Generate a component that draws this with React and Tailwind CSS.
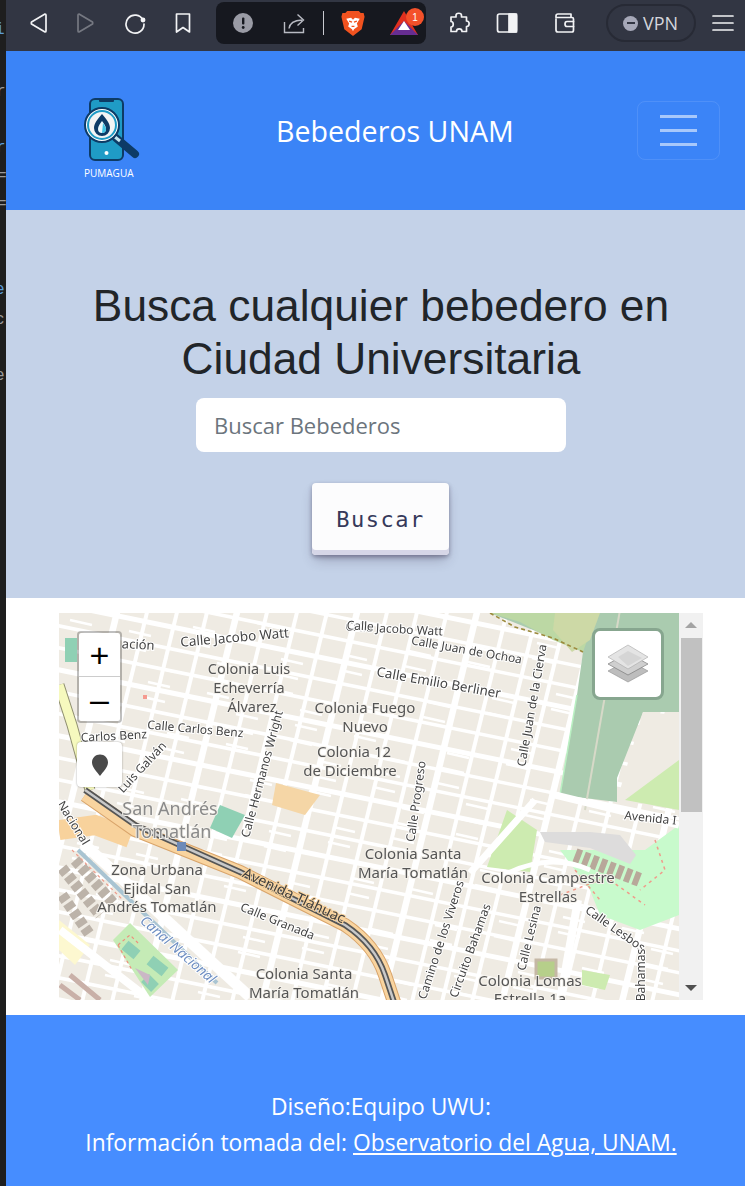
import React from 'react'

const SANS = 'font-["Open_Sans","Noto_Sans",sans-serif]'

// Labels on the map, in page coordinates (the svg viewBox starts at 59,613)
const PLACES = [
  ['Colonia Luis', 249, 674], ['Echeverría', 249, 693], ['Álvarez', 252, 712],
  ['Colonia Fuego', 365, 713], ['Nuevo', 365, 732], ['Colonia 12', 354, 757], ['de Diciembre', 350, 776],
  ['Zona Urbana', 157, 875], ['Ejidal San', 157, 894], ['Andrés Tomatlán', 157, 912],
  ['Colonia Santa', 413, 859], ['María Tomatlán', 413, 878],
  ['Colonia Campestre', 548, 883], ['Estrellas', 548, 902],
  ['Colonia Santa', 304, 979], ['María Tomatlán', 304, 998],
  ['Colonia Lomas', 530, 986], ['Estrella 1a', 530, 1004],
]

const STREETS = [
  ['Calle Jacobo Watt', 235, 642, -5, 13.4], ['Calle Jacobo Watt', 394, 633, 3, 12],
  ['Calle Juan de Ochoa', 466, 654, 10, 12], ['Calle Emilio Berliner', 438, 687, 10, 13.4],
  ['Calle Juan de la Cierva', 536, 706, -80, 12], ['Calle Carlos Benz', 195, 733, 5, 12],
  ['Carlos Benz', 114, 740, -3, 12], ['Luis Galván', 145, 770, -47, 12],
  ['Calle Hermanos Wright', 266, 775, -75, 12], ['Calle Progreso', 420, 802, -82, 12],
  ['Calle Granada', 276, 925, 22, 12], ['Camino de los Viveros', 445, 941, -72, 12],
  ['Circuito Bahamas', 474, 952, -70, 12], ['Calle Lesina', 533, 939, -76, 12],
  ['Calle Lesbos', 613, 932, 35, 12], ['Avenida I', 650, 822, 6, 12], ['Bahamas', 645, 975, -90, 12],
  ['Calle', 360, 630, 3, 12], ['ación', 138, 649, 3, 13], ['Nacional', 70, 825, 58, 12],
]

// White street grid: two families of long parallel streets plus short alleys
function streetLines() {
  const lines = []
  for (let i = -16; i < 32; i++) {
    const y = 600 + i * 22
    lines.push({ d: `M 40 ${y} L 700 ${y + 135}`, w: i % 3 === 0 ? 5 : 3.5 })
  }
  for (let i = 0; i < 28; i++) {
    const x = 120 + i * 30
    lines.push({ d: `M ${x} 600 L ${x - 100} 1010`, w: i % 4 === 0 ? 6.5 : 4 })
  }
  for (let i = 0; i < 150; i++) {
    const x = 70 + ((i * 83) % 600)
    const y = 620 + ((i * 47) % 380)
    lines.push({ d: `M ${x} ${y} L ${x + 22} ${y + 5}`, w: 2.5 })
  }
  return lines
}

function MapDrawing() {
  return (
    <svg viewBox="59 613 620 387" className="block h-[387px] w-[620px] blur-[0.4px]" style={{ fontFamily: '"Noto Sans", sans-serif' }}>
      <rect x="59" y="613" width="620" height="387" fill="#efebe3" />
      {streetLines().map((l, i) => (
        <path key={i} d={l.d} stroke="#ffffff" strokeWidth={l.w} fill="none" />
      ))}

      {/* Parks and green areas */}
      <path d="M 490 613 L 679 613 L 679 712 L 643 712 L 617 778 L 617 802 L 560 795 L 577 695 L 583 652 L 553 638 Z" fill="#aacbaf" />
      <path d="M 490 613 L 555 613 L 585 613 L 590 632 L 583 652 L 553 640 L 520 622 Z" fill="#bcd8a4" />
      <path d="M 555 613 L 600 613 L 590 640 L 572 652 L 553 630 Z" fill="#cdd9a6" />
      <path d="M 577 695 L 560 795" stroke="#b9f0c2" strokeWidth="1.5" fill="none" />
      <path d="M 490 613 L 515 627 L 553 638 L 583 652" stroke="#9c8a3c" strokeWidth="1.6" strokeDasharray="4 3" fill="none" />
      <path d="M 620 610 L 585 810" stroke="#d7d9c8" strokeWidth="2" fill="none" />
      <path d="M 643 712 L 679 715 L 679 810 L 617 800 Z" fill="#efebe3" />
      <path d="M 625 800 L 679 760 L 679 810 Z" fill="#cdebb0" />
      <path d="M 645 850 L 679 825 L 679 915 L 640 930 L 600 915 L 590 890 L 560 850 Z" fill="#c8facc" />
      <path d="M 487 867 L 507 810 L 537 830 L 530 872 L 513 870 Z" fill="#cdebb0" />
      <path d="M 540 832 L 590 832 L 620 835 L 636 855 L 630 864 L 590 848 L 545 842 Z" fill="#dddcdc" />
      <path d="M 575 855 L 640 880" stroke="#b8a89a" strokeWidth="14" strokeDasharray="6 3" fill="none" />
      <path d="M 575 870 L 600 900 M 610 880 L 645 905 M 560 895 L 600 880 M 655 840 L 665 870 L 640 890" stroke="#f19a8a" strokeWidth="1.5" strokeDasharray="3 4" fill="none" />
      <path d="M 220 805 L 245 815 L 232 838 L 210 828 Z" fill="#8fd0b4" />
      <path d="M 276 783 L 320 795 L 305 815 L 272 805 Z" fill="#f5d6a6" />
      <rect x="65" y="638" width="12" height="24" fill="#8fd0b4" />
      <rect x="143" y="695" width="4" height="4" fill="#f59a90" />
      <rect x="536" y="960" width="20" height="18" fill="#b6cf8a" stroke="#c5b8a5" strokeWidth="3" />
      <path d="M 582 970 L 610 975 L 605 990 L 582 985 Z" fill="#cdebb0" />

      {/* Wide white roads on the east side */}
      <path d="M 555 795 L 679 825 M 535 800 L 470 873" stroke="#ffffff" strokeWidth="7" fill="none" />
      <path d="M 495 880 Q 545 850 590 870" stroke="#ffffff" strokeWidth="5" fill="none" />
      <path d="M 578 900 L 560 1000" stroke="#ffffff" strokeWidth="8" fill="none" />

      {/* Buildings west of the canal */}
      <path d="M 62 868 L 100 915 M 62 895 L 90 935 M 75 860 L 115 905" stroke="#bcb3a9" strokeWidth="11" strokeDasharray="7 3" fill="none" />
      <path d="M 59 920 L 90 945 L 75 965 L 59 950 Z" fill="#fdf8d0" />
      <path d="M 70 975 L 100 1000 M 60 985 L 80 1000" stroke="#c9b0a8" strokeWidth="5" fill="none" />

      {/* Canal Nacional and the road beside it */}
      <path d="M 83 843 L 250 997" stroke="#ffffff" strokeWidth="11" fill="none" />
      <path d="M 78 850 L 130 900 L 217 983" stroke="#a9c4d2" strokeWidth="4" fill="none" />
      <path d="M 72 850 L 125 902" stroke="#ee9d8c" strokeWidth="1.2" strokeDasharray="3 3" fill="none" />
      <path d="M 60 930 L 150 1000" stroke="#ffffff" strokeWidth="8" fill="none" />

      {/* Park by the canal */}
      <path d="M 113 940 L 130 923 L 178 970 L 150 997 Z" fill="#c5ebb6" />
      <path d="M 125 945 L 137 955 M 150 960 L 165 972 M 145 978 L 155 988" stroke="#8fd0b4" strokeWidth="11" fill="none" />
      <path d="M 135 968 L 150 975 L 148 985 Z" fill="#cbb8c6" />
      <path d="M 118 945 L 130 935 L 140 945 M 118 945 L 132 970" stroke="#ee8d7c" strokeWidth="1.2" strokeDasharray="3 3" fill="none" />

      {/* Yellow road along the left edge */}
      <path d="M 59 685 L 72 725 L 90 790" stroke="#8f8f70" strokeWidth="11" fill="none" />
      <path d="M 59 685 L 72 725 L 90 790" stroke="#f6f9be" strokeWidth="9" fill="none" />

      {/* Avenida Tlahuac with the metro line on top */}
      <path d="M 59 830 L 95 825 L 130 838" stroke="#f8d29c" strokeWidth="20" fill="none" />
      <path d="M 85 795 L 135 830 L 240 872 L 345 925 Q 375 945 385 975 L 395 1005" stroke="#d9a46a" strokeWidth="14" fill="none" />
      <path d="M 85 795 L 135 830 L 240 872 L 345 925 Q 375 945 385 975 L 395 1005" stroke="#f9d49f" strokeWidth="12" fill="none" />
      <path d="M 85 790 L 135 825 L 240 872 L 345 925 Q 375 945 385 975 L 395 1005" stroke="#555555" strokeWidth="6" fill="none" />
      <path d="M 85 790 L 135 825 L 240 872 L 345 925 Q 375 945 385 975 L 395 1005" stroke="#c9c9c9" strokeWidth="2.5" fill="none" />
      <rect x="177" y="842" width="9" height="9" fill="#6d8ab8" />

      {/* Labels */}
      <g fontSize="15" fill="#555555" stroke="#f5f2ec" strokeWidth="2" paintOrder="stroke" textAnchor="middle">
        {PLACES.map(([t, x, y], i) => <text key={i} x={x} y={y} fontSize={i < 3 ? 14.5 : 15}>{t}</text>)}
      </g>
      <g fontSize="18" fill="#8a8a8a" stroke="#f5f2ec" strokeWidth="2" paintOrder="stroke" textAnchor="middle">
        <text x="170" y="815">San Andrés</text>
        <text x="172" y="838">Tomatlán</text>
      </g>
      <g fill="#444444" stroke="#ffffff" strokeWidth="2" paintOrder="stroke" textAnchor="middle">
        {STREETS.map(([t, x, y, r, size], i) => (
          <text key={i} x={x} y={y} fontSize={size} transform={`rotate(${r} ${x} ${y})`}>{t}</text>
        ))}
      </g>
      <text x="292" y="900" transform="rotate(25 292 900)" fontSize="14.5" fill="#3e3e3e" stroke="#f9d49f" strokeWidth="2" paintOrder="stroke" textAnchor="middle">Avenida Tláhuac</text>
      <text x="175" y="953" transform="rotate(41 175 953)" fontSize="14" fontStyle="italic" fill="#6f8fc2" stroke="#ffffff" strokeWidth="2" paintOrder="stroke" textAnchor="middle">Canal Nacional</text>
    </svg>
  )
}

function ToolbarIcon({ children, className = 'ml-0' }) {
  return (
    <svg viewBox="0 0 24 24" fill="none" stroke="#f2f3f5" strokeWidth="1.7" strokeLinejoin="round" strokeLinecap="round" className={`h-6 w-6 shrink-0 ${className}`}>
      {children}
    </svg>
  )
}

function BrowserBar() {
  return (
    <div className="flex h-[51px] items-center bg-[#323643] pb-[5px]">
      <ToolbarIcon className="ml-[20px]"><path d="M 19 3 L 5.5 11 Q 5 12 5.5 13 L 19 21 Q 20 21 20 20 L 20 4 Q 20 3 19 3 Z" /></ToolbarIcon>
      <ToolbarIcon className="ml-[24px] opacity-35"><path d="M 5 3 L 18.5 11 Q 19 12 18.5 13 L 5 21 Q 4 21 4 20 L 4 4 Q 4 3 5 3 Z" /></ToolbarIcon>
      <ToolbarIcon className="ml-[25px]"><path d="M 20 9 A 9 9 0 1 0 21 13" /><circle cx="20" cy="9" r="1.6" fill="#f2f3f5" /></ToolbarIcon>
      <ToolbarIcon className="ml-[24px]"><path d="M 5.5 3 L 18.5 3 L 18.5 21 L 12 16.5 L 5.5 21 Z" /></ToolbarIcon>

      {/* Address bar pill */}
      <div className="ml-[21px] flex h-[42px] w-[210px] shrink-0 items-center rounded-lg bg-[#16181f] pl-[15px]">
        <svg viewBox="0 0 24 24" className="h-6 w-6 shrink-0">
          <circle cx="12" cy="12" r="10" fill="#9a9ba5" />
          <rect x="11" y="6.5" width="2.4" height="7" rx="1" fill="#16181f" />
          <circle cx="12.2" cy="16.5" r="1.4" fill="#16181f" />
        </svg>
        <svg viewBox="0 0 24 24" fill="none" stroke="#b9bbc3" strokeWidth="1.4" className="ml-[27px] h-6 w-6 shrink-0">
          <path d="M 2.5 11 L 2.5 21.5 L 21.5 21.5 L 21.5 17" />
          <path d="M 7 17.5 Q 8 9.5 20 9 M 15.5 3.5 L 21.5 9 L 15.5 14.5" />
        </svg>
        <div className="ml-[17px] h-[24px] w-px bg-[#c9cad0]" />
        <svg viewBox="0 0 24 28" className="ml-[17px] h-[27px] w-6 shrink-0">
          <path d="M 6 1 L 18 1 L 20 3 L 23 3 L 24 7 L 21 20 L 12 27 L 3 20 L 0 7 L 1 3 L 4 3 Z" fill="#f1521f" />
          <path d="M 5 9 L 10 8 L 12 10 L 14 8 L 19 9 L 16 14 L 17 17 L 13 20 L 12 22 L 11 20 L 7 17 L 8 14 Z" fill="#ffffff" />
          <path d="M 8 11.5 L 11 12.5 M 16 11.5 L 13 12.5 M 10.5 17 L 13.5 17" stroke="#f1521f" strokeWidth="1.4" />
        </svg>
        <div className="relative ml-[25px] h-[24px] w-[28px] shrink-0">
          <svg viewBox="0 0 28 24" className="h-[24px] w-[28px]">
            <path d="M 14 0 L 28 24 L 0 24 Z" fill="#e0301e" />
            <path d="M 14 10 L 28 24 L 0 24 Z" fill="#662d91" />
            <path d="M 14 10 L 20 19 L 8 19 Z" fill="#ffffff" />
          </svg>
          <span className="absolute -right-[6px] -top-[3px] flex h-[18px] w-[18px] items-center justify-center rounded-full bg-[#f4512a] font-['Liberation_Sans',sans-serif] text-[10px] text-white">1</span>
        </div>
      </div>

      <ToolbarIcon className="ml-[21px]"><path d="M 9 4.5 C 9 1.5 14.5 1.5 14.5 4.5 L 14.5 6 L 19.5 6 L 19.5 10 C 23 10 23 15.5 19.5 15.5 L 19.5 20.5 L 15 20.5 C 15 17 9.5 17 9.5 20.5 L 4 20.5 L 4 16 C 7 16 7 10.5 4 10.5 L 4 6 L 9 6 Z" /></ToolbarIcon>
      <ToolbarIcon className="ml-[24px]"><rect x="2.5" y="3" width="19" height="18" rx="2" /><path d="M 14 3 L 21.5 3 L 21.5 21 L 14 21 Z" fill="#f2f3f5" /></ToolbarIcon>
      <ToolbarIcon className="ml-[33px]"><path d="M 4 8 L 4 19 Q 4 21 6 21 L 20 21 Q 21.5 21 21.5 19 L 21.5 8 Q 21.5 6.5 20 6.5 L 4 6.5 M 4 6.5 L 4 5 Q 4 3 6 3 L 19 3 L 19 6.5" /><path d="M 21.5 10.5 L 15 10.5 Q 13 10.5 13 13 Q 13 15.5 15 15.5 L 21.5 15.5" /></ToolbarIcon>

      {/* VPN pill */}
      <div className="ml-[30px] flex h-[38px] w-[90px] shrink-0 items-center rounded-full border-2 border-[#272a35] pl-[15px]">
        <span className="flex h-[15px] w-[15px] items-center justify-center rounded-full bg-[#a6a8b8]">
          <span className="h-[2px] w-[8px] bg-[#323643]" />
        </span>
        <span className={`ml-[5px] text-[18px] text-[#d4d6dd] ${SANS}`}>VPN</span>
      </div>

      <ToolbarIcon className="ml-[15px]"><path d="M 2 5 L 22 5 M 2 12 L 22 12 M 2 19 L 22 19" /></ToolbarIcon>
    </div>
  )
}

function Logo() {
  return (
    <div className="mt-[16px] flex w-[56px] flex-col">
      <svg viewBox="0 0 56 64" className="h-[64px] w-[56px]">
        <rect x="6" y="1" width="33" height="61" rx="5" fill="#1f9bc6" stroke="#0d3b66" strokeWidth="2" />
        <rect x="15" y="1" width="15" height="3" rx="1" fill="#0d3b66" />
        <circle cx="22.5" cy="55" r="2" fill="#ffffff" />
        <path d="M 32 40 L 51 56" stroke="#0d3b66" strokeWidth="8" strokeLinecap="round" />
        <path d="M 31 39 L 36 43" stroke="#c6e6f0" strokeWidth="3" />
        <circle cx="18" cy="27" r="17" fill="#ffffff" stroke="#0d3b66" strokeWidth="2" />
        <circle cx="18" cy="27" r="14" fill="#f4f4f4" stroke="#1f9bc6" strokeWidth="2" />
        <path d="M 18 16 C 22 21 26 25 26 30 A 8 8 0 0 1 10 30 C 10 25 14 21 18 16 Z" fill="#0d3b66" />
        <path d="M 18 23 C 20 26 22 28 22 31 A 4 4 0 0 1 14 31 C 14 28 16 26 18 23 Z" fill="#eaf8fc" />
        <path d="M 18 35 A 4 4 0 0 0 22 31 C 22 29 20 27 19 25 Z" fill="#3fc3e4" />
      </svg>
      <span className={`mt-[5px] whitespace-nowrap text-[10px] leading-3 text-white ${SANS}`}>PUMAGUA</span>
    </div>
  )
}

export default function App() {
  return (
    <div className="flex h-[1186px] w-[745px] overflow-hidden bg-white">
      {/* Sliver of the editor window behind the browser */}
      <div className="relative w-[6px] shrink-0 overflow-hidden bg-[#1e1e1e] font-['Liberation_Mono',monospace] text-[16px] leading-5 text-[#9a9a9a]">
        <span className="absolute -left-[5px] top-[20px] text-[#5a9bd8]">i</span>
        <span className="absolute -left-[4px] top-[82px]">r</span>
        <span className="absolute -left-[4px] top-[138px] text-[#5a9bd8]">r</span>
        <span className="absolute -left-[3px] top-[166px]">=</span>
        <span className="absolute -left-[3px] top-[194px]">=</span>
        <span className="absolute -left-[5px] top-[280px] text-[#5a9bd8]">e</span>
        <span className="absolute -left-[5px] top-[310px]">c</span>
        <span className="absolute -left-[5px] top-[366px]">e</span>
      </div>

      <div className="w-[750px] shrink-0">
        <BrowserBar />

        {/* Header */}
        <header className="flex h-[159px] items-center bg-[#3b84f7] pl-[78px] pr-[36px]">
          <Logo />
          <h2 className={`ml-[136px] mt-[2px] whitespace-nowrap text-[28.6px] font-normal text-white ${SANS}`}>Bebederos UNAM</h2>
          <button className="ml-auto flex h-[59px] w-[83px] flex-col items-center justify-center gap-[11px] rounded-lg border border-white/10">
            <span className="h-[3px] w-[37px] bg-white/55" />
            <span className="h-[3px] w-[37px] bg-white/55" />
            <span className="h-[3px] w-[37px] bg-white/55" />
          </button>
        </header>

        {/* Search */}
        <section className="flex h-[388px] flex-col items-center bg-[#c4d2e8] pt-[69px]">
          <h1 className="text-center font-['Liberation_Sans',sans-serif] text-[44.3px] font-normal leading-[53px] text-[#212529]">
            Busca cualquier bebedero en<br />Ciudad Universitaria
          </h1>
          <input
            placeholder="Buscar Bebederos"
            className={`mt-[13px] h-[54px] w-[370px] rounded-lg bg-white px-[18px] text-[22px] outline-none placeholder:text-[#6c757d] ${SANS}`}
          />
          <button className="mr-[1px] mt-[31px] h-[72px] w-[137px] rounded bg-[#fcfcfd] font-['DejaVu_Sans_Mono',monospace] text-[22px] tracking-[1.5px] text-[#36395a] shadow-[0_2px_4px_rgba(45,35,66,0.4),0_7px_13px_-3px_rgba(45,35,66,0.3),inset_0_-5px_0_#d6d6e7]">
            Buscar
          </button>
        </section>

        {/* Map */}
        <section className="flex h-[417px] px-[53px] pt-[15px]">
          <div className="relative h-[387px] w-[620px] shrink-0 overflow-hidden">
            <MapDrawing />
            <div className="absolute left-[18px] top-[18px] flex w-[45px] flex-col overflow-hidden rounded border-2 border-black/25 bg-white bg-clip-padding">
              <div className="flex h-[44px] items-center justify-center border-b border-[#cccccc] font-['Liberation_Sans',sans-serif] text-[34px] leading-none text-black">+</div>
              <div className="flex h-[44px] items-center justify-center font-['Liberation_Sans',sans-serif] text-[34px] leading-none text-black">–</div>
            </div>
            <div className="absolute left-[18px] top-[129px] flex h-[45px] w-[45px] items-center justify-center rounded bg-white shadow-[0_0_2px_rgba(0,0,0,0.4)]">
              <svg viewBox="0 0 16 22" className="h-[22px] w-4">
                <path d="M 8 0.5 C 12.5 0.5 16 4 16 8.5 C 16 13 11 18 8 22 C 5 18 0 13 0 8.5 C 0 4 3.5 0.5 8 0.5 Z" fill="#4a4a4a" />
              </svg>
            </div>
            <div className="absolute left-[533px] top-[15px] flex h-[72px] w-[72px] items-center justify-center rounded-lg border-[3px] border-[#87a68f] bg-white">
              <svg viewBox="0 0 40 40" className="h-[40px] w-[40px]">
                <path d="M 0 27 L 20 16 L 40 27 L 20 38 Z" fill="#bdbdbd" stroke="#8f8f8f" strokeWidth="0.6" />
                <path d="M 0 20 L 20 9 L 40 20 L 20 31 Z" fill="#cfcfcf" stroke="#6f6f6f" strokeWidth="0.6" />
                <path d="M 0 13 L 20 1 L 40 13 L 20 25 Z" fill="#e4e4e4" stroke="#a8a8a8" strokeWidth="0.6" />
                <path d="M 10 13 L 20 7 L 34 14 L 20 22 Z" fill="#d5d5d5" />
              </svg>
            </div>
          </div>

          {/* Scrollbar */}
          <div className="flex h-[387px] w-[25px] flex-col items-center bg-[#f1f1f1]">
            <span className="mt-[9px] h-0 w-0 border-x-[6px] border-b-[6px] border-x-transparent border-b-[#a3a3a3]" />
            <span className="mt-[10px] h-[174px] w-[21px] bg-[#c1c1c1]" />
            <span className="mb-[9px] mt-auto h-0 w-0 border-x-[6px] border-t-[6px] border-x-transparent border-t-[#505050]" />
          </div>
        </section>

        {/* Footer */}
        <footer className={`h-[171px] bg-[#468dff] pt-[74px] text-center text-[22.8px] leading-[36px] text-white ${SANS}`}>
          Diseño:Equipo UWU:<br />
          Información tomada del: <a href="#" className="underline">Observatorio del Agua, UNAM.</a>
        </footer>
      </div>
    </div>
  )
}
